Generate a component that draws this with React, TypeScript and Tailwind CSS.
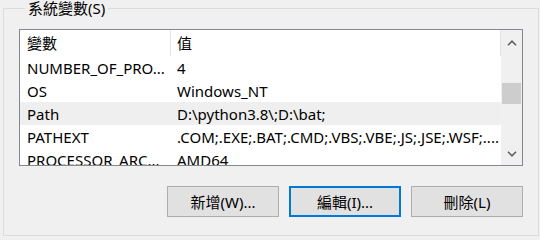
// System variables group box from the Windows environment-variables dialog.
const ROWS = [
  { name: 'NUMBER_OF_PRO...', value: '4' },
  { name: 'OS', value: 'Windows_NT' },
  { name: 'Path', value: 'D:\\python3.8\\;D:\\bat;', selected: true },
  { name: 'PATHEXT', value: '.COM;.EXE;.BAT;.CMD;.VBS;.VBE;.JS;.JSE;.WSF;....' },
  { name: 'PROCESSOR_ARC...', value: 'AMD64' },
];

function Chevron({ up }: { up?: boolean }) {
  return (
    <svg width="10" height="6" viewBox="0 0 10 6" aria-hidden="true">
      <path
        d={up ? 'M1 5.2 L5 1.2 L9 5.2' : 'M1 0.8 L5 4.8 L9 0.8'}
        fill="none"
        stroke="#606060"
        strokeWidth="1.6"
      />
    </svg>
  );
}

function Button({ label, focused }: { label: string; focused?: boolean }) {
  return (
    <button
      type="button"
      className={`flex h-[31px] w-[112px] items-center justify-center bg-[#e1e1e1] text-[15px] leading-[20px] text-black ${
        focused ? 'border-2 border-[#0078d7]' : 'border border-[#adadad]'
      }`}
    >
      {label}
    </button>
  );
}

export default function App() {
  return (
    <div className="h-[240px] w-[540px] overflow-hidden bg-[#f0f0f0] pl-[3px] font-['Noto_Sans','Noto_Sans_CJK_TC',sans-serif] text-[15px] leading-[20px] text-black">
      <fieldset className="-mt-[2px] h-[238px] w-[536px] border border-[#dcdcdc] px-[15px] pb-[19px]">
        <legend className="ml-[6px] px-[3px] leading-[20px]">系統變數(S)</legend>

        {/* List view */}
        <div className="mt-[11px] flex h-[137px] border border-[#828790] bg-white">
          <div className="flex w-[481px] flex-col overflow-hidden">
            <div className="flex h-[26px] shrink-0 items-center">
              <div className="flex h-full w-[151px] items-center border-r border-[#e5e5e5] pl-[7px]">變數</div>
              <div className="flex h-full flex-1 items-center border-r border-[#e5e5e5] pl-[6px]">值</div>
            </div>
            {ROWS.map((r) => (
              <div
                key={r.name}
                className={`flex h-[23px] shrink-0 items-center whitespace-nowrap ${r.selected ? 'bg-[#efefef]' : ''}`}
              >
                <div className="w-[151px] pl-[7px]">{r.name}</div>
                <div className="flex-1 pl-[6px]">{r.value}</div>
              </div>
            ))}
          </div>

          {/* Scrollbar */}
          <div className="flex w-[21px] flex-col items-center bg-[#f0f0f0]">
            <div className="flex h-[23px] w-full items-center justify-center pt-[2px]">
              <Chevron up />
            </div>
            <div className="mt-[30px] h-[21px] w-[19px] bg-[#cdcdcd]" />
            <div className="flex-1" />
            <div className="flex h-[23px] w-full items-center justify-center">
              <Chevron />
            </div>
          </div>
        </div>

        <div className="mt-[20px] flex justify-end gap-[10px]">
          <Button label="新增(W)..." />
          <Button label="編輯(I)..." focused />
          <Button label="刪除(L)" />
        </div>
      </fieldset>
    </div>
  );
}
